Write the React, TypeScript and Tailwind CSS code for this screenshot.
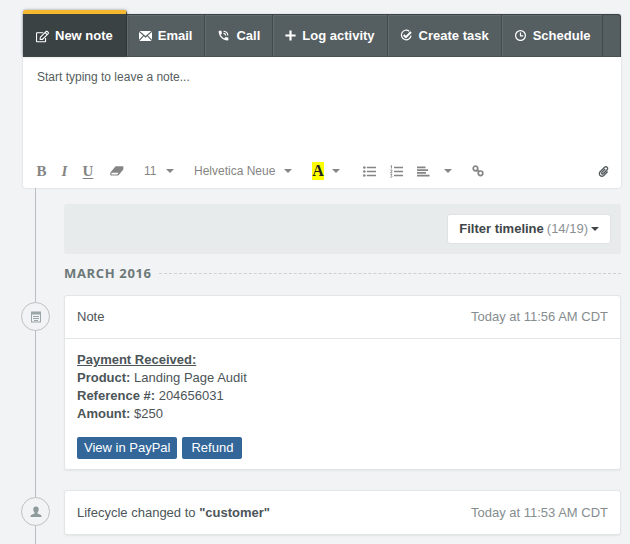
import type { ReactNode } from 'react';
import { FaPaperclip, FaRegEdit } from 'react-icons/fa';
import { MdPhoneInTalk } from 'react-icons/md';

function MailIcon() {
  return (
    <svg viewBox="0 0 13 10" className="h-[10px] w-[13px]" fill="currentColor" aria-hidden="true">
      <path d="M0.6 0h11.8L6.5 5z" />
      <path d="M0 0.9 4.1 4.6 0 8.8z" />
      <path d="M13 0.9 8.9 4.6 13 8.8z" />
      <path d="M4.8 5.2 6.5 6.7 8.2 5.2 12.6 10H0.4z" />
    </svg>
  );
}

function PlusIcon() {
  return (
    <svg viewBox="0 0 11 11" className="size-[11px]" fill="currentColor" aria-hidden="true">
      <path d="M4.4 0.4h2.2v4h4v2.2h-4v4H4.4v-4h-4V4.4h4z" />
    </svg>
  );
}

function TaskIcon() {
  return (
    <svg viewBox="0 0 13 13" className="size-[13px]" fill="none" stroke="currentColor" aria-hidden="true">
      <path d="M9.2 2.2A4.8 4.8 0 1 0 11 6.6" strokeWidth="1.2" />
      <path d="M3.7 6 5.9 8.1 11 3" strokeWidth="2" />
    </svg>
  );
}

function ClockIcon() {
  return (
    <svg viewBox="0 0 13 13" className="size-[13px]" fill="none" stroke="currentColor" strokeWidth="1.2" aria-hidden="true">
      <circle cx="6.5" cy="6.5" r="4.9" />
      <path d="M6.5 3.4V6.8H9.2" />
    </svg>
  );
}

function EraserIcon() {
  return (
    <svg viewBox="0 0 14 10" className="h-[10px] w-[14px]" fill="currentColor" aria-hidden="true">
      <path fillRule="evenodd" d="M5.6 0.3H12.6Q14 0.4 13.3 1.8V3.4L8.5 9.2 7.7 9.6H1Q-0.1 9.4 0.4 7.6V6.4zM1.5 7 1.6 8.4H7.2L8.5 6.7H1.8z" />
    </svg>
  );
}

function BulletListIcon() {
  return (
    <svg viewBox="0 0 13 11" className="h-[11px] w-[13px]" fill="currentColor" aria-hidden="true">
      <circle cx="1.3" cy="1.5" r="1.3" />
      <circle cx="1.3" cy="5.5" r="1.3" />
      <circle cx="1.3" cy="9.5" r="1.3" />
      <path d="M3.8 0.7H13v1.6H3.8zM3.8 4.7H13v1.6H3.8zM3.8 8.7H13v1.6H3.8z" />
    </svg>
  );
}

function NumberListIcon() {
  return (
    <svg viewBox="0 0 13 13" className="size-[13px]" fill="currentColor" aria-hidden="true">
      <path d="M4 1.7H13v1.6H4zM4 5.7H13v1.6H4zM4 9.7H13v1.6H4z" />
      <path fill="none" stroke="currentColor" strokeWidth="0.9" d="M0.5 1 1.5 0.6V3.6M0.3 5.2Q1 4.5 1.9 5.1T0.5 7.8H2.3M0.3 9.3H2L1.2 10.5Q2.3 10.8 1.9 11.8T0.3 12.2" />
    </svg>
  );
}

function AlignIcon() {
  return (
    <svg viewBox="0 0 13 11" className="h-[11px] w-[13px]" fill="currentColor" aria-hidden="true">
      <path d="M0 0.4h8.5v1.8H0zM0 3.2h11v1.8H0zM0 6h9v1.8H0zM0 8.8h12.5v1.8H0z" />
    </svg>
  );
}

function LinkIcon() {
  return (
    <svg viewBox="0 0 12 12" className="size-[12px]" fill="none" stroke="currentColor" strokeWidth="1.7" aria-hidden="true">
      <circle cx="3.5" cy="3.5" r="2.3" />
      <circle cx="8.5" cy="8.3" r="2.3" />
      <path d="M4.4 5.4 7.5 6.4" />
    </svg>
  );
}

function Caret({ className = '' }: { className?: string }) {
  return (
    <svg viewBox="0 0 8 4" className={`h-[4px] w-[8px] ${className}`} fill="currentColor" aria-hidden="true">
      <path d="M0 0h8L4 4z" />
    </svg>
  );
}

function NoteIcon() {
  return (
    <svg viewBox="0 0 10 12" className="h-[12px] w-[10px]" aria-hidden="true">
      <path fill="#9aa5a5" fillRule="evenodd" d="M0 0.5h10v11H0zM1 3.5v7h8v-7z" />
      <path stroke="#9aa5a5" d="M2 5.5h6M2 7.5h6M3 9.5h4" />
    </svg>
  );
}

function PersonIcon() {
  return (
    <svg viewBox="0 0 12 12" className="size-[12px]" fill="#8f9b9b" aria-hidden="true">
      <path d="M6 0.5c1.8 0 2.7 1.1 2.7 2.8 0 1.5-.5 2.5-1.2 3.2v1.1l3 1.2c.7.3 1 .8 1 2.2H.5c0-1.4.3-1.9 1-2.2l3-1.2V6.5C3.8 5.8 3.3 4.8 3.3 3.3 3.3 1.6 4.2.5 6 .5z" />
    </svg>
  );
}

const tabs: { label: string; icon: ReactNode }[] = [
  { label: 'Email', icon: <MailIcon /> },
  { label: 'Call', icon: <MdPhoneInTalk className="size-[13px]" /> },
  { label: 'Log activity', icon: <PlusIcon /> },
  { label: 'Create task', icon: <TaskIcon /> },
  { label: 'Schedule', icon: <ClockIcon /> },
];

function TimelineItem({ icon, children }: { icon: ReactNode; children: ReactNode }) {
  return (
    <li className="flex items-start">
      <span className="mt-[7px] mr-[14px] -ml-[43px] flex size-[29px] shrink-0 items-center justify-center rounded-full border border-[#bcc2c3] bg-[#f2f3f5]">
        {icon}
      </span>
      <article className="min-w-0 flex-1 rounded-[3px] border border-[#e3e6e7] bg-white shadow-[0_1px_2px_rgba(0,0,0,0.06)]">
        {children}
      </article>
    </li>
  );
}

export default function App() {
  return (
    <main className="flex min-h-screen flex-col bg-[#f2f3f5] pt-[14px] pr-[9px] pl-[23px] font-['Liberation_Sans',Arial,sans-serif] text-[13px] text-[#4c5558]">
      <section className="rounded-[3px] bg-white shadow-[0_0_2px_rgba(0,0,0,0.18)]">
        <nav className="flex h-[43px] rounded-t-[3px] border border-[#3b4345] border-b-[#495153] bg-[#555e60] font-bold whitespace-nowrap text-white [text-shadow:0_1px_1px_rgba(0,0,0,0.3)]">
          <button type="button" className="-mt-[5px] -ml-px flex items-center gap-[6px] rounded-t-[3px] border-t-4 border-r border-t-[#f5b82e] border-r-[#2f3638] bg-[#3b4244] px-[13px] pt-[2px] shadow-[0_0_3px_rgba(0,0,0,0.4)]">
            <FaRegEdit className="size-[13px]" />
            New note
          </button>
          {tabs.map((tab) => (
            <button key={tab.label} type="button" className="flex items-center gap-[6px] border-r border-[#424a4c] px-[12px] shadow-[inset_1px_1px_0_#626b6d]">
              {tab.icon}
              {tab.label}
            </button>
          ))}
        </nav>

        <textarea
          aria-label="Note"
          placeholder="Start typing to leave a note..."
          className="block h-[98px] w-full resize-none px-[14px] pt-[12px] text-[12px] leading-[16px] outline-none placeholder:text-[#555d60] placeholder:opacity-100"
        />

        <div className="flex h-[33px] items-center pr-[12px] pb-px pl-[13px] text-[12px] text-[#858585]">
          <div className="flex items-center font-['Liberation_Serif',serif] text-[15px] leading-[16px] font-bold">
            <button type="button" className="w-[11px]">B</button>
            <button type="button" className="ml-[12px] w-[11px] italic">I</button>
            <button type="button" className="ml-[12px] w-[12px] underline underline-offset-2">U</button>
          </div>
          <button type="button" aria-label="Clear formatting" className="ml-[16px]"><EraserIcon /></button>
          <label className="ml-[20px] grid w-[30px] items-center">
            <select aria-label="Font size" className="col-start-1 row-start-1 w-full appearance-none outline-none">
              <option>11</option>
            </select>
            <Caret className="pointer-events-none col-start-1 row-start-1 justify-self-end" />
          </label>
          <label className="ml-[20px] grid w-[98px] items-center">
            <select aria-label="Font family" className="col-start-1 row-start-1 w-full appearance-none outline-none">
              <option>Helvetica Neue</option>
            </select>
            <Caret className="pointer-events-none col-start-1 row-start-1 justify-self-end" />
          </label>
          <button type="button" aria-label="Highlight colour" className="ml-[20px] flex items-center gap-[8px]">
            <span className="w-[12px] bg-[#ffff00] text-center font-['Liberation_Serif',serif] text-[16px] leading-[18px] font-bold text-[#222]">A</span>
            <Caret />
          </button>
          <button type="button" aria-label="Bulleted list" className="ml-[23px]"><BulletListIcon /></button>
          <button type="button" aria-label="Numbered list" className="ml-[14px]"><NumberListIcon /></button>
          <button type="button" aria-label="Alignment" className="ml-[14px] flex items-center gap-[14px]">
            <AlignIcon />
            <Caret />
          </button>
          <button type="button" aria-label="Insert link" className="ml-[20px]"><LinkIcon /></button>
          <button type="button" aria-label="Attach file" className="ml-auto text-[#555d60]"><FaPaperclip className="size-[11px]" /></button>
        </div>
      </section>

      <section className="ml-[12px] flex-1 border-l border-[#b9bec0] pt-[16px] pb-[10px] pl-[28px]">
        <div className="flex h-[50px] items-center justify-end rounded-[3px] bg-[#e7ebec] pr-[10px]">
          <button type="button" className="flex h-[30px] items-center gap-[3px] rounded-[3px] border border-[#dfe3e4] bg-white px-[11px] font-bold text-[#404648]">
            Filter timeline <span className="font-normal text-[#8b9193]">(14/19)</span>
            <Caret />
          </button>
        </div>

        <h2 className="mt-[10px] flex items-center gap-[7px] font-['Open_Sans',sans-serif] leading-[18px] font-bold text-[#6c7878]">
          <span className="tracking-wider">MARCH 2016</span>
          <span className="flex-1 border-t border-dashed border-[#cdd1d2]" />
        </h2>

        <ol className="mt-[13px] flex flex-col gap-[20px]">
          <TimelineItem icon={<NoteIcon />}>
            <header className="flex h-[43px] items-center justify-between border-b border-[#e3e6e7] px-[12px]">
              <h3>Note</h3>
              <time className="text-[#868d8f]">Today at 11:56 AM CDT</time>
            </header>
            <div className="px-[12px] pt-[12px] pb-[10px] leading-[18px]">
              <p className="font-bold underline">Payment Received:</p>
              <p><strong>Product:</strong> Landing Page Audit</p>
              <p><strong>Reference #:</strong> 204656031</p>
              <p><strong>Amount:</strong> $250</p>
              <div className="mt-[14px] flex gap-[5px] text-white">
                <button type="button" className="h-[22px] rounded-[2px] bg-[#336699] px-[7px]">View in PayPal</button>
                <button type="button" className="h-[22px] rounded-[2px] bg-[#336699] px-[9px]">Refund</button>
              </div>
            </div>
          </TimelineItem>
          <TimelineItem icon={<PersonIcon />}>
            <div className="flex h-[43px] items-center justify-between px-[12px]">
              <p>Lifecycle changed to <strong>"customer"</strong></p>
              <time className="text-[#868d8f]">Today at 11:53 AM CDT</time>
            </div>
          </TimelineItem>
        </ol>
      </section>
    </main>
  );
}
